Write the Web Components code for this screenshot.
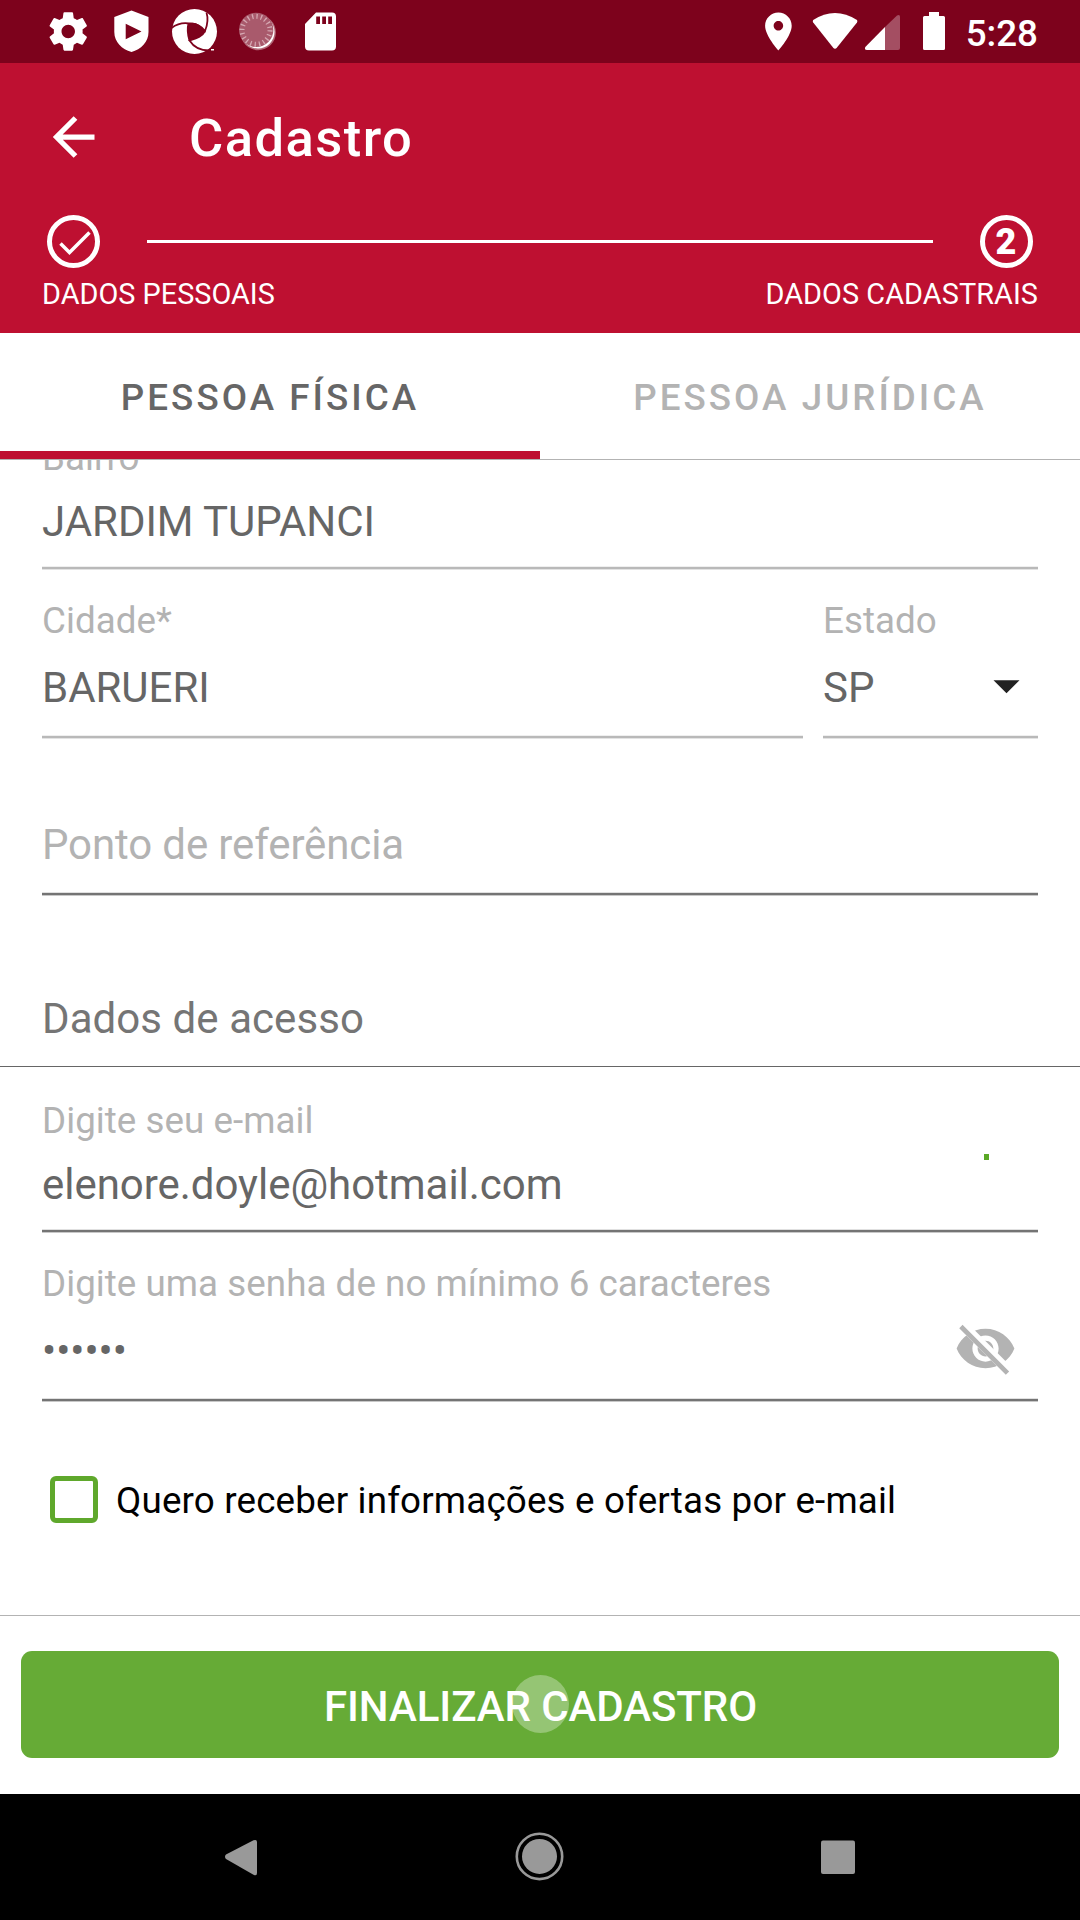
<!DOCTYPE html>
<html lang="pt-BR">
<head>
<meta charset="utf-8">
<title>Cadastro</title>
<style>
html,body{margin:0;padding:0;background:#fff}
body{width:1080px;height:1920px;overflow:hidden;font-family:Roboto,"Noto Sans",sans-serif;color:#666}
</style>
</head>
<body>
<signup-screen></signup-screen>
<script>
const define = (name, html) => customElements.define(name, class extends HTMLElement {
  constructor() {
    super();
    const t = document.createElement('template');
    t.innerHTML = html;
    this.attachShadow({ mode: 'open' }).append(t.content.cloneNode(true));
  }
});

define('status-bar', `
<style>
:host{display:flex;box-sizing:border-box;height:63px;background:#7d021c;justify-content:space-between;padding:0 42px 0 44px;color:#fff}
svg{display:block;flex:none}
.l,.r{display:flex;align-items:flex-start}
.time{font-size:36.75px;font-weight:500;line-height:43px;margin:12px 0 0 18px;white-space:nowrap}
</style>
<div class="l">
 <svg width="300" height="63" viewBox="44 0 300 63" fill="#fff">
  <path transform="translate(45.2 8.4) scale(1.92)" d="M19.43 12.98c.04-.32.07-.64.07-.98s-.03-.66-.07-.98l2.11-1.65c.19-.15.24-.42.12-.64l-2-3.46c-.12-.22-.39-.3-.61-.22l-2.49 1c-.52-.4-1.08-.73-1.69-.98l-.38-2.65C14.46 2.18 14.25 2 14 2h-4c-.25 0-.46.18-.49.42l-.38 2.65c-.61.25-1.17.59-1.69.98l-2.49-1c-.23-.09-.49 0-.61.22l-2 3.46c-.13.22-.07.49.12.64l2.11 1.65c-.04.32-.07.65-.07.98s.03.66.07.98l-2.11 1.65c-.19.15-.24.42-.12.64l2 3.46c.12.22.39.3.61.22l2.49-1c.52.4 1.08.73 1.69.98l.38 2.65c.03.24.24.42.49.42h4c.25 0 .46-.18.49-.42l.38-2.65c.61-.25 1.17-.59 1.69-.98l2.49 1c.23.09.49 0 .61-.22l2-3.46c.12-.22.07-.49-.12-.64l-2.11-1.65zM12 15.5c-1.93 0-3.5-1.57-3.5-3.5s1.57-3.5 3.5-3.5 3.5 1.57 3.5 3.5-1.57 3.5-3.5 3.5z"/>
  <path fill-rule="evenodd" d="M131.500 10.500L148.500 17V32C148.500 42 141 49.500 131.500 52C122 49.500 114.300 42 114.300 32V17ZM125.700 23.700V39.300L141.500 31.500Z"/>
  <circle cx="194.500" cy="31.500" r="22.500"/>
  <path fill="#7d021c" d="M188.500 23.500C194 21 200 24 205 31C202 37 196 38.500 189.500 40.500C187.500 34 187 29 188.500 23.500Z"/>
  <g fill="none" stroke="#7d021c" stroke-width="1.800">
   <path d="M171.500 28C177 24 183 22.500 189 23.500C197 23 201 26 205 31C207.500 25 208.500 19 206.500 12.500"/>
   <path d="M205 31C202 37 196 38.500 189.500 40.500C193 46 199 50.500 209 50.500"/>
   <path d="M189.500 40.500C187.500 34 187 29 188.500 23.500"/>
  </g>
  <rect x="211" y="49" width="3" height="1.500"/>
  <circle cx="258.200" cy="32.500" r="17.700" opacity=".4"/>
  <circle cx="258" cy="32" r="16.500"/>
  <circle cx="256.200" cy="29.900" r="17.200" fill="#a95a6c"/>
  <circle cx="256" cy="30.300" r="14" fill="none" stroke="#d5a8b2" stroke-width="5" stroke-dasharray="1.300 3.098"/>
  <path fill-rule="evenodd" d="M316 12.500H332Q336 12.500 336 16.500V46.500Q336 50.500 332 50.500H309Q305 50.500 305 46.500V24ZM316.200 16.500V24H320V16.500ZM322.200 16.500V24H326V16.500ZM328.200 16.500V24H332V16.500Z"/>
 </svg>
</div>
<div class="r">
 <svg width="190" height="63" viewBox="758 0 190 63" fill="#fff">
  <path transform="translate(755.600 8.700) scale(1.9)" d="M12 2C8.130 2 5 5.130 5 9c0 5.250 7 13 7 13s7-7.750 7-13c0-3.870-3.130-7-7-7zm0 9.500c-1.380 0-2.500-1.120-2.500-2.500s1.120-2.500 2.500-2.500 2.500 1.120 2.500 2.500-1.120 2.500-2.500 2.500z"/>
  <path d="M813.200 20Q824 13 835 13T857 20Q857.800 21 857 22.500L837 47.500Q835 50 833 47.500L813.200 22.500Q812.300 21 813.200 20Z"/>
  <path fill="#a44e62" d="M885 27L897 15.600Q900 14 900 17V48Q900 50 898 50H885Z"/>
  <path d="M885 27V50H867Q864 50 865.300 47Z"/>
  <path d="M929 12H939V16H943.500Q945 16 945 17.500V48.500Q945 50 943.500 50H924.500Q923 50 923 48.500V17.500Q923 16 924.500 16H929Z"/>
 </svg>
 <span class="time">5:28</span>
</div>`);

define('app-header', `
<style>
:host{display:block;box-sizing:border-box;height:270px;background:#be1031;color:#fff;padding:44px 42px 0}
.bar{display:flex;height:62px;align-items:flex-start}
.bar svg{margin:8.500px 0 0 10px;flex:none}
h1{margin:0 0 0 94px;font-size:52.5px;line-height:62px;font-weight:500;letter-spacing:1.45px;white-space:nowrap}
.steps{display:flex;align-items:center;height:53px;margin:46px 5.500px 0 5px}
.dot{width:53px;height:53px;box-sizing:border-box;border:5.250px solid #fff;border-radius:50%;display:flex;align-items:center;justify-content:center;font-weight:900;font-size:36px;line-height:42px;flex:none}
.rule{flex:1;height:3px;background:#fff;margin:0 47px}
.labels{display:flex;justify-content:space-between;margin-top:9px;font-size:28.875px;line-height:34px;white-space:nowrap}
.labels span+span{letter-spacing:.06px}
</style>
<div class="bar">
 <svg width="43" height="43" viewBox="0 0 43 43" fill="none" stroke="#fff" stroke-width="5.250"><path d="M42.500 21H5M23.500 2L4.500 21L23.500 40"/></svg>
 <h1>Cadastro</h1>
</div>
<div class="steps">
 <div class="dot"><svg width="42" height="42" viewBox="0 0 42 42" fill="none" stroke="#fff" stroke-width="3.500"><path d="M7.500 22.500L16.500 31.500L36.500 11.500"/></svg></div>
 <div class="rule"></div>
 <div class="dot">2</div>
</div>
<div class="labels"><span>DADOS PESSOAIS</span><span>DADOS CADASTRAIS</span></div>`);

define('tab-item', `
<style>
:host{display:flex;flex:1;box-sizing:border-box;height:126px;padding-top:43px;justify-content:center;font-size:36.75px;line-height:43px;font-weight:500;letter-spacing:3.04px;color:#b3b3b3;white-space:nowrap}
:host([active]){color:#666;border-bottom:8px solid #be1031}
</style><slot></slot>`);

define('tab-strip', `
<style>:host{display:flex;height:126px;border-bottom:1px solid #b3b3b3;background:#fff}</style><slot></slot>`);

define('form-field', `
<style>
:host{display:block;--c:#b9b9b9;--a:#efefef;--b:#e3e3e3}
:host([dark]){--c:#747474;--a:#e0e0e0;--b:#c8c8c8}
.label{font-size:36.75px;line-height:43px;letter-spacing:.04px;color:#b3b3b3;white-space:nowrap}
.value{display:flex;height:49px;font-size:42px;line-height:49px;letter-spacing:-.03px;color:#666;white-space:nowrap;margin-top:var(--gap,18px);justify-content:space-between}
:host([hint]) .value{color:#b3b3b3;margin-top:0;letter-spacing:-.12px}
:host([secret]) .value>span{margin-top:1px}
.line{height:4px;margin-top:var(--pad,20px);background:linear-gradient(var(--a) 1px,var(--c) 1px 3px,var(--b) 3px)}
</style>
<div class="label"><slot name="label"></slot></div>
<div class="value"><span><slot></slot></span><slot name="end"></slot></div>
<div class="line"></div>`);

define('check-row', `
<style>
:host{display:flex;align-items:flex-start}
i{width:48px;height:47.500px;box-sizing:border-box;border:5.250px solid #5fa82c;border-radius:6px;margin:.500px 18px 0 0}
span{font-size:36.75px;line-height:43px;letter-spacing:.17px;margin-top:4px;color:#000;white-space:nowrap}
</style><i></i><span><slot></slot></span>`);

define('primary-button', `
<style>
:host{display:flex;position:relative;height:107px;border-radius:11px;background:#66ab36;color:#fff;align-items:flex-start;justify-content:center;font-size:42px;font-weight:500;line-height:49px;letter-spacing:-.08px;white-space:nowrap}
span{margin:31px 0 0 1px}
b{position:absolute;left:491px;top:24px;width:57px;height:58px;border-radius:50%;background:rgba(255,255,255,.31)}
</style><span><slot></slot></span><b></b>`);

define('nav-bar', `
<style>:host{display:flex;height:126px;background:#000;align-items:flex-start;justify-content:space-between;padding:0 225px}svg{display:block}</style>
<svg width="32" height="126" fill="#999"><path d="M1 60.500L28.500 46.300Q32 45 32 48V79Q32 82.500 28.500 80.700L1 65Q-1 62.700 1 60.500Z"/></svg>
<svg width="50" height="126"><circle cx="25.500" cy="62.400" r="22.700" fill="none" stroke="#999" stroke-width="2.600"/><circle cx="25.500" cy="62.400" r="17.500" fill="#999"/></svg>
<svg width="34" height="126" fill="#999"><rect y="46.500" width="34" height="33.500" rx="2"/></svg>`);

define('signup-screen', `
<style>
:host{display:flex;flex-direction:column;width:1080px;height:1920px;background:#fff}
.scroll{flex:none;height:1155px;overflow:hidden}
.form{display:flow-root;margin-top:-24px}
.pad{margin-left:42px;margin-right:42px}
.row{display:flex;gap:20px;margin-top:29px}
h2{margin:98px 0 0;padding:0 42px 23px;border-bottom:1px solid #666;font-size:42px;line-height:49px;letter-spacing:.07px;font-weight:400;color:#757575}
.foot{border-top:1px solid #b3b3b3;height:143px;padding:35px 21px 0;flex:none;box-sizing:content-box}
.arrow{margin:17px 18px 0 0}
.eye{margin:-8px 21px -8px 0}
.tick{width:5.500px;height:5.500px;background:#5aa826;margin:-6px 49px 0 0}
</style>
<status-bar></status-bar>
<app-header></app-header>
<tab-strip><tab-item active>PESSOA FÍSICA</tab-item><tab-item>PESSOA JURÍDICA</tab-item></tab-strip>
<div class="scroll"><div class="form">
 <form-field class="pad"><span slot="label">Bairro</span>JARDIM TUPANCI</form-field>
 <div class="row pad">
  <form-field style="width:761px;--gap:21px;--pad:23px"><span slot="label">Cidade*</span>BARUERI</form-field>
  <form-field style="width:215px;--gap:21px;--pad:23px"><span slot="label">Estado</span>SP<svg slot="end" class="arrow" width="27" height="14" fill="#212121"><path d="M.500 .300H26.500L13.500 13.300Z"/></svg></form-field>
 </div>
 <form-field class="pad" dark hint style="margin-top:81px;--pad:23px">Ponto de referência</form-field>
 <h2>Dados de acesso</h2>
 <form-field class="pad" dark style="margin-top:32px"><span slot="label">Digite seu e-mail</span>elenore.doyle@hotmail.com<div slot="end" class="tick"></div></form-field>
 <form-field class="pad" dark secret style="margin-top:29px;--gap:20px;--pad:24px"><span slot="label">Digite uma senha de no mínimo 6 caracteres</span>••••••<svg slot="end" class="eye" width="63" height="63" viewBox="0 0 24 24"><path fill="#b3b3b3" fill-rule="evenodd" d="M12 4.500C7 4.500 2.730 7.610 1 12c1.730 4.390 6 7.500 11 7.500s9.270-3.110 11-7.500c-1.730-4.390-6-7.500-11-7.500zM12 17c-2.760 0-5-2.240-5-5s2.240-5 5-5 5 2.240 5 5-2.240 5-5 5zM12 9c-1.660 0-3 1.340-3 3s1.340 3 3 3 3-1.340 3-3-1.340-3-3-3z"/><path fill="#fff" d="M2 4.270L19.730 22L22.270 19.460L4.540 1.730Z"/><path d="M3.270 4.270L19.740 20.740" stroke="#b3b3b3" stroke-width="1.800" stroke-linecap="square"/></svg></form-field>
 <check-row style="margin:73px 0 0 50px">Quero receber informações e ofertas por e-mail</check-row>
</div></div>
<div class="foot"><primary-button>FINALIZAR CADASTRO</primary-button></div>
<nav-bar></nav-bar>`);
</script>
</body>
</html>
